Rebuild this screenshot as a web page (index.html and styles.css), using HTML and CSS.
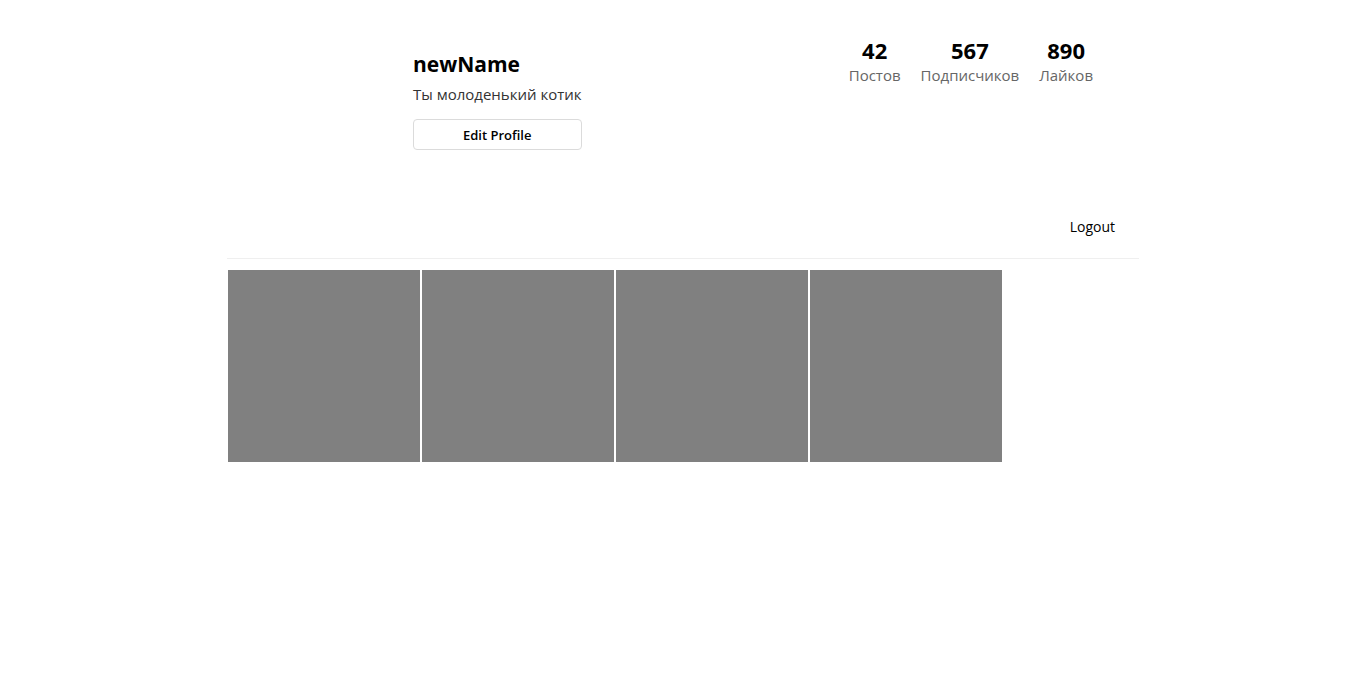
FILE: index.html
```html
<!DOCTYPE html>
<html lang="ru">
<head>
<meta charset="utf-8">
<meta name="viewport" content="width=device-width, initial-scale=1">
<title>newName</title>
<link rel="stylesheet" href="styles.css">
</head>
<body>
<main class="profile">
  <header class="profile-header">
    <div class="profile-info">
      <h1 class="profile-name">newName</h1>
      <p class="profile-bio">Ты молоденький котик</p>
      <button class="edit-button" type="button">Edit Profile</button>
    </div>
    <ul class="stats">
      <li class="stat"><strong class="stat-value">42</strong><span class="stat-label">Постов</span></li>
      <li class="stat"><strong class="stat-value">567</strong><span class="stat-label">Подписчиков</span></li>
      <li class="stat"><strong class="stat-value">890</strong><span class="stat-label">Лайков</span></li>
    </ul>
  </header>
  <div class="actions">
    <button class="logout-button" type="button">Logout</button>
  </div>
  <section class="posts">
    <div class="post"></div>
    <div class="post"></div>
    <div class="post"></div>
    <div class="post"></div>
  </section>
</main>
</body>
</html>
```
FILE: styles.css
```css
* {
  box-sizing: border-box;
}

body {
  margin: 0;
  background: #fff;
  color: #000;
  font-family: "Segoe UI", "Open Sans", "Noto Sans", sans-serif;
}

.profile {
  width: 90%;
  max-width: 912px;
  margin: 0 auto;
}

.profile-header {
  display: flex;
  justify-content: space-between;
  align-items: flex-start;
  padding: 35px 46px 0 186px;
}

.profile-info {
  display: flex;
  flex-direction: column;
  padding-top: 14px;
}

.profile-name {
  margin: 0;
  font-size: 21px;
  line-height: 30px;
  font-weight: 700;
}

.profile-bio {
  margin: 5px 0 14px;
  color: #333;
  font-size: 15px;
  line-height: 21px;
}

.edit-button {
  height: 31px;
  border: 1px solid #dbdbdb;
  border-radius: 4px;
  background: #fff;
  color: #000;
  font: inherit;
  font-size: 13px;
  font-weight: 600;
}

.stats {
  display: flex;
  gap: 20px;
  margin: 0;
  padding: 0;
  list-style: none;
}

.stat {
  display: flex;
  flex-direction: column;
  align-items: center;
}

.stat-value {
  font-size: 22px;
  line-height: 30px;
}

.stat-label {
  color: #666;
  font-size: 15px;
  line-height: 21px;
}

.actions {
  display: flex;
  justify-content: flex-end;
  margin-top: 46px;
  padding: 15px 24px 17px;
  border-bottom: 1px solid #efefef;
}

.logout-button {
  height: 30px;
  padding: 0;
  border: 0;
  background: none;
  color: #000;
  font: inherit;
  font-size: 14px;
}

.posts {
  display: flex;
  flex-wrap: wrap;
  gap: 2px;
  padding: 11px 0 0 1px;
}

.post {
  width: 192px;
  height: 192px;
  background: #808080;
}
```
